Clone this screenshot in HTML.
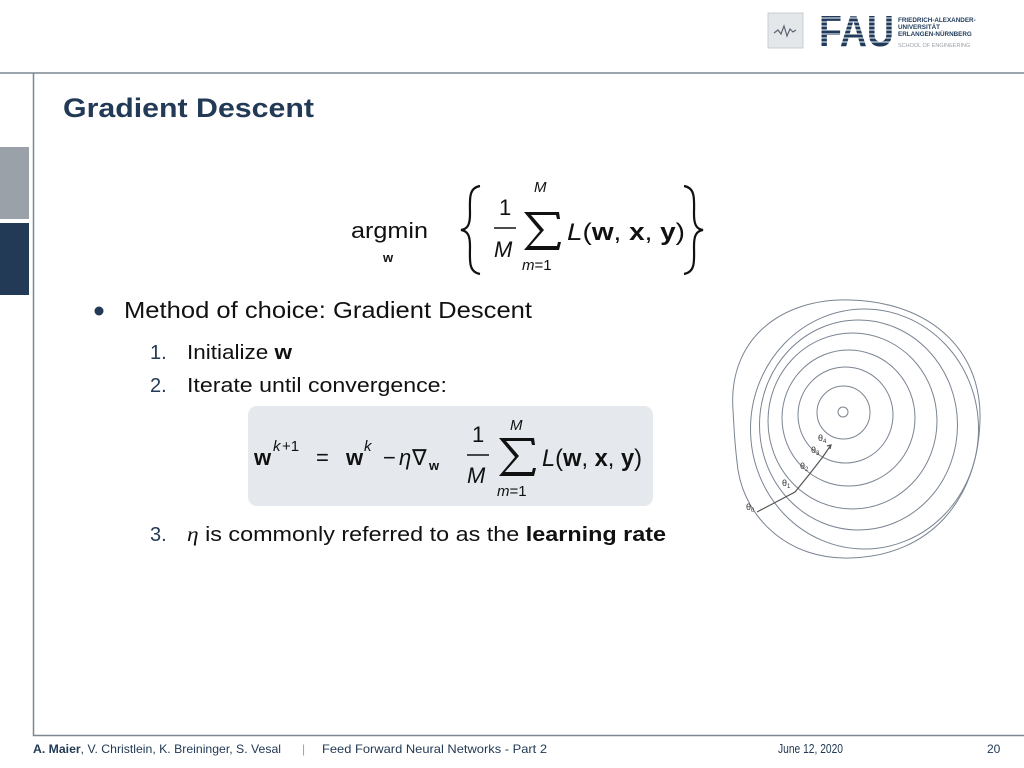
<!DOCTYPE html>
<html><head><meta charset="utf-8"><style>
html,body{margin:0;padding:0;background:#fff;width:1024px;height:768px;overflow:hidden}
svg{display:block}
text{font-family:"Liberation Sans",Arial,sans-serif}
</style></head><body>
<svg width="1024" height="768" viewBox="0 0 1024 768" xmlns="http://www.w3.org/2000/svg">
<rect width="1024" height="768" fill="#fff"/>
<line x1="0" y1="73" x2="1024" y2="73" stroke="#7d8791" stroke-width="1.5"/>
<path d="M33.5 73 V735.5 H1024" fill="none" stroke="#7d8791" stroke-width="1.5"/>
<rect x="0" y="147" width="29" height="72" fill="#9aa1a8"/>
<rect x="0" y="223" width="29" height="72" fill="#223a55"/>
<rect x="768" y="13" width="35" height="35" fill="#e4e7ea" stroke="#c9ced3"/>
<path d="M774 33 l4 -3 l3 4 l3 -8 l3 10 l3 -7 l3 3 l3 -2" fill="none" stroke="#5a6470" stroke-width="1.2"/>
<text x="819" y="46" font-size="44" font-weight="bold" fill="#1f3a5a" textLength="75" lengthAdjust="spacingAndGlyphs">FAU</text>
<g stroke="#fff" stroke-width="1">
<line x1="819" y1="18" x2="895" y2="18"/><line x1="819" y1="22" x2="895" y2="22"/><line x1="819" y1="26" x2="895" y2="26"/><line x1="819" y1="30" x2="895" y2="30"/><line x1="819" y1="34" x2="895" y2="34"/><line x1="819" y1="38" x2="895" y2="38"/><line x1="819" y1="42" x2="895" y2="42"/>
</g>
<g fill="#1f3a5a" font-size="6.3" font-weight="bold">
<text x="898" y="22">FRIEDRICH-ALEXANDER-</text>
<text x="898" y="29">UNIVERSITÄT</text>
<text x="898" y="36">ERLANGEN-NÜRNBERG</text>
</g>
<text x="898" y="47" font-size="5.5" fill="#9aa1a8">SCHOOL OF ENGINEERING</text>
<text x="63" y="117" font-size="27" font-weight="bold" fill="#223a55" textLength="251" lengthAdjust="spacingAndGlyphs">Gradient Descent</text>
<g fill="#111">
<text x="351" y="238" font-size="22" textLength="77" lengthAdjust="spacingAndGlyphs">argmin</text>
<text x="383" y="262" font-size="13" font-weight="bold">w</text>
<path d="M480 186 C468 188 470 200 470 214 C470 224 468 229 461 230 C468 231 470 236 470 246 C470 260 468 272 480 274" fill="none" stroke="#111" stroke-width="2.2"/>
<text x="499" y="215" font-size="22">1</text>
<line x1="494" y1="228" x2="516" y2="228" stroke="#111" stroke-width="1.4"/>
<text x="494" y="257" font-size="22" font-style="italic">M</text>
<text x="534" y="192" font-size="15" font-style="italic">M</text>
<path d="M524 212 H559 L560 219 H557 L556 215 H531 L544 230 L530 246 H557 L558 242 H561 L559 250 H524 L540 231 Z" fill="#111"/>
<text x="522" y="270" font-size="15"><tspan font-style="italic">m</tspan>=1</text>
<text x="567" y="240" font-size="24" textLength="118" lengthAdjust="spacingAndGlyphs"><tspan font-style="italic">L</tspan>(<tspan font-weight="bold">w</tspan>, <tspan font-weight="bold">x</tspan>, <tspan font-weight="bold">y</tspan>)</text>
<path d="M684 186 C696 188 694 200 694 214 C694 224 696 229 703 230 C696 231 694 236 694 246 C694 260 696 272 684 274" fill="none" stroke="#111" stroke-width="2.2"/>
</g>
<circle cx="99" cy="311" r="4.5" fill="#223a55"/>
<text x="124" y="318" font-size="23" fill="#111" textLength="408" lengthAdjust="spacingAndGlyphs">Method of choice: Gradient Descent</text>
<text x="150" y="359" font-size="20" fill="#223a55">1.</text>
<text x="187" y="359" font-size="20" fill="#111" textLength="105" lengthAdjust="spacingAndGlyphs">Initialize <tspan font-weight="bold">w</tspan></text>
<text x="150" y="392" font-size="20" fill="#223a55">2.</text>
<text x="187" y="392" font-size="20" fill="#111" textLength="260" lengthAdjust="spacingAndGlyphs">Iterate until convergence:</text>
<rect x="248" y="406" width="405" height="100" rx="9" fill="#e5e9ee"/>
<g fill="#111">
<text x="254" y="465" font-size="22" font-weight="bold">w</text>
<text x="273" y="451" font-size="15" font-style="italic">k</text>
<text x="282" y="451" font-size="15">+1</text>
<text x="316" y="465" font-size="22">=</text>
<text x="346" y="465" font-size="22" font-weight="bold">w</text>
<text x="364" y="451" font-size="15" font-style="italic">k</text>
<text x="383" y="465" font-size="22">−</text>
<text x="399" y="465" font-size="22" font-style="italic" font-family="Liberation Serif">η</text>
<text x="412" y="465" font-size="22">∇</text>
<text x="429" y="470" font-size="13" font-weight="bold">w</text>
<text x="472" y="442" font-size="22">1</text>
<line x1="467" y1="455" x2="489" y2="455" stroke="#111" stroke-width="1.4"/>
<text x="467" y="483" font-size="22" font-style="italic">M</text>
<text x="510" y="430" font-size="15" font-style="italic">M</text>
<path d="M499 438 H534 L535 445 H532 L531 441 H506 L519 456 L505 472 H532 L533 468 H536 L534 476 H499 L515 457 Z" fill="#111"/>
<text x="497" y="496" font-size="15"><tspan font-style="italic">m</tspan>=1</text>
<text x="542" y="466" font-size="24" textLength="100" lengthAdjust="spacingAndGlyphs"><tspan font-style="italic">L</tspan>(<tspan font-weight="bold">w</tspan>, <tspan font-weight="bold">x</tspan>, <tspan font-weight="bold">y</tspan>)</text>
</g>
<text x="150" y="541" font-size="20" fill="#223a55">3.</text>
<text x="187" y="541" font-size="20" fill="#111" textLength="479" lengthAdjust="spacingAndGlyphs"><tspan font-style="italic" font-family="Liberation Serif">η</tspan> is commonly referred to as the <tspan font-weight="bold">learning rate</tspan></text>
<g fill="none" stroke="#7a8592" stroke-width="1">
<circle cx="843" cy="412" r="5"/>
<ellipse cx="843.5" cy="412.5" rx="26.5" ry="26.5"/>
<ellipse cx="845.5" cy="415" rx="47.5" ry="48"/>
<ellipse cx="848.5" cy="418" rx="66.5" ry="68"/>
<ellipse cx="852.5" cy="421" rx="84.5" ry="88"/>
<ellipse cx="858.5" cy="425" rx="99" ry="105"/>
<ellipse cx="864.5" cy="429" rx="114" ry="120"/>
<path d="M733 410 C728 340 780 298 850 300 C930 302 982 350 980 420 C978 500 930 556 850 558 C790 560 746 520 738 470 C734 440 734 425 733 410 Z"/>
</g>
<g stroke="#555" stroke-width="1.2" fill="none">
<path d="M757 512 L795 492 L808 476 L822 458 L831 445"/>
<path d="M827 446 L831 445 L830 449"/>
</g>
<g font-size="9" fill="#333">
<text x="746" y="510">θ<tspan font-size="6" dy="2">0</tspan></text>
<text x="782" y="486">θ<tspan font-size="6" dy="2">1</tspan></text>
<text x="800" y="469">θ<tspan font-size="6" dy="2">2</tspan></text>
<text x="811" y="453">θ<tspan font-size="6" dy="2">3</tspan></text>
<text x="818" y="441">θ<tspan font-size="6" dy="2">4</tspan></text>
</g>
<g font-size="12" fill="#223a55">
<text x="33" y="753" textLength="248" lengthAdjust="spacingAndGlyphs"><tspan font-weight="bold">A. Maier</tspan>, V. Christlein, K. Breininger, S. Vesal</text>
<text x="302" y="753" fill="#9aa1a8">|</text>
<text x="322" y="753" textLength="225" lengthAdjust="spacingAndGlyphs">Feed Forward Neural Networks - Part 2</text>
<text x="778" y="753" font-size="13" textLength="65" lengthAdjust="spacingAndGlyphs">June 12, 2020</text>
<text x="987" y="753">20</text>
</g>
</svg>
</body></html>
